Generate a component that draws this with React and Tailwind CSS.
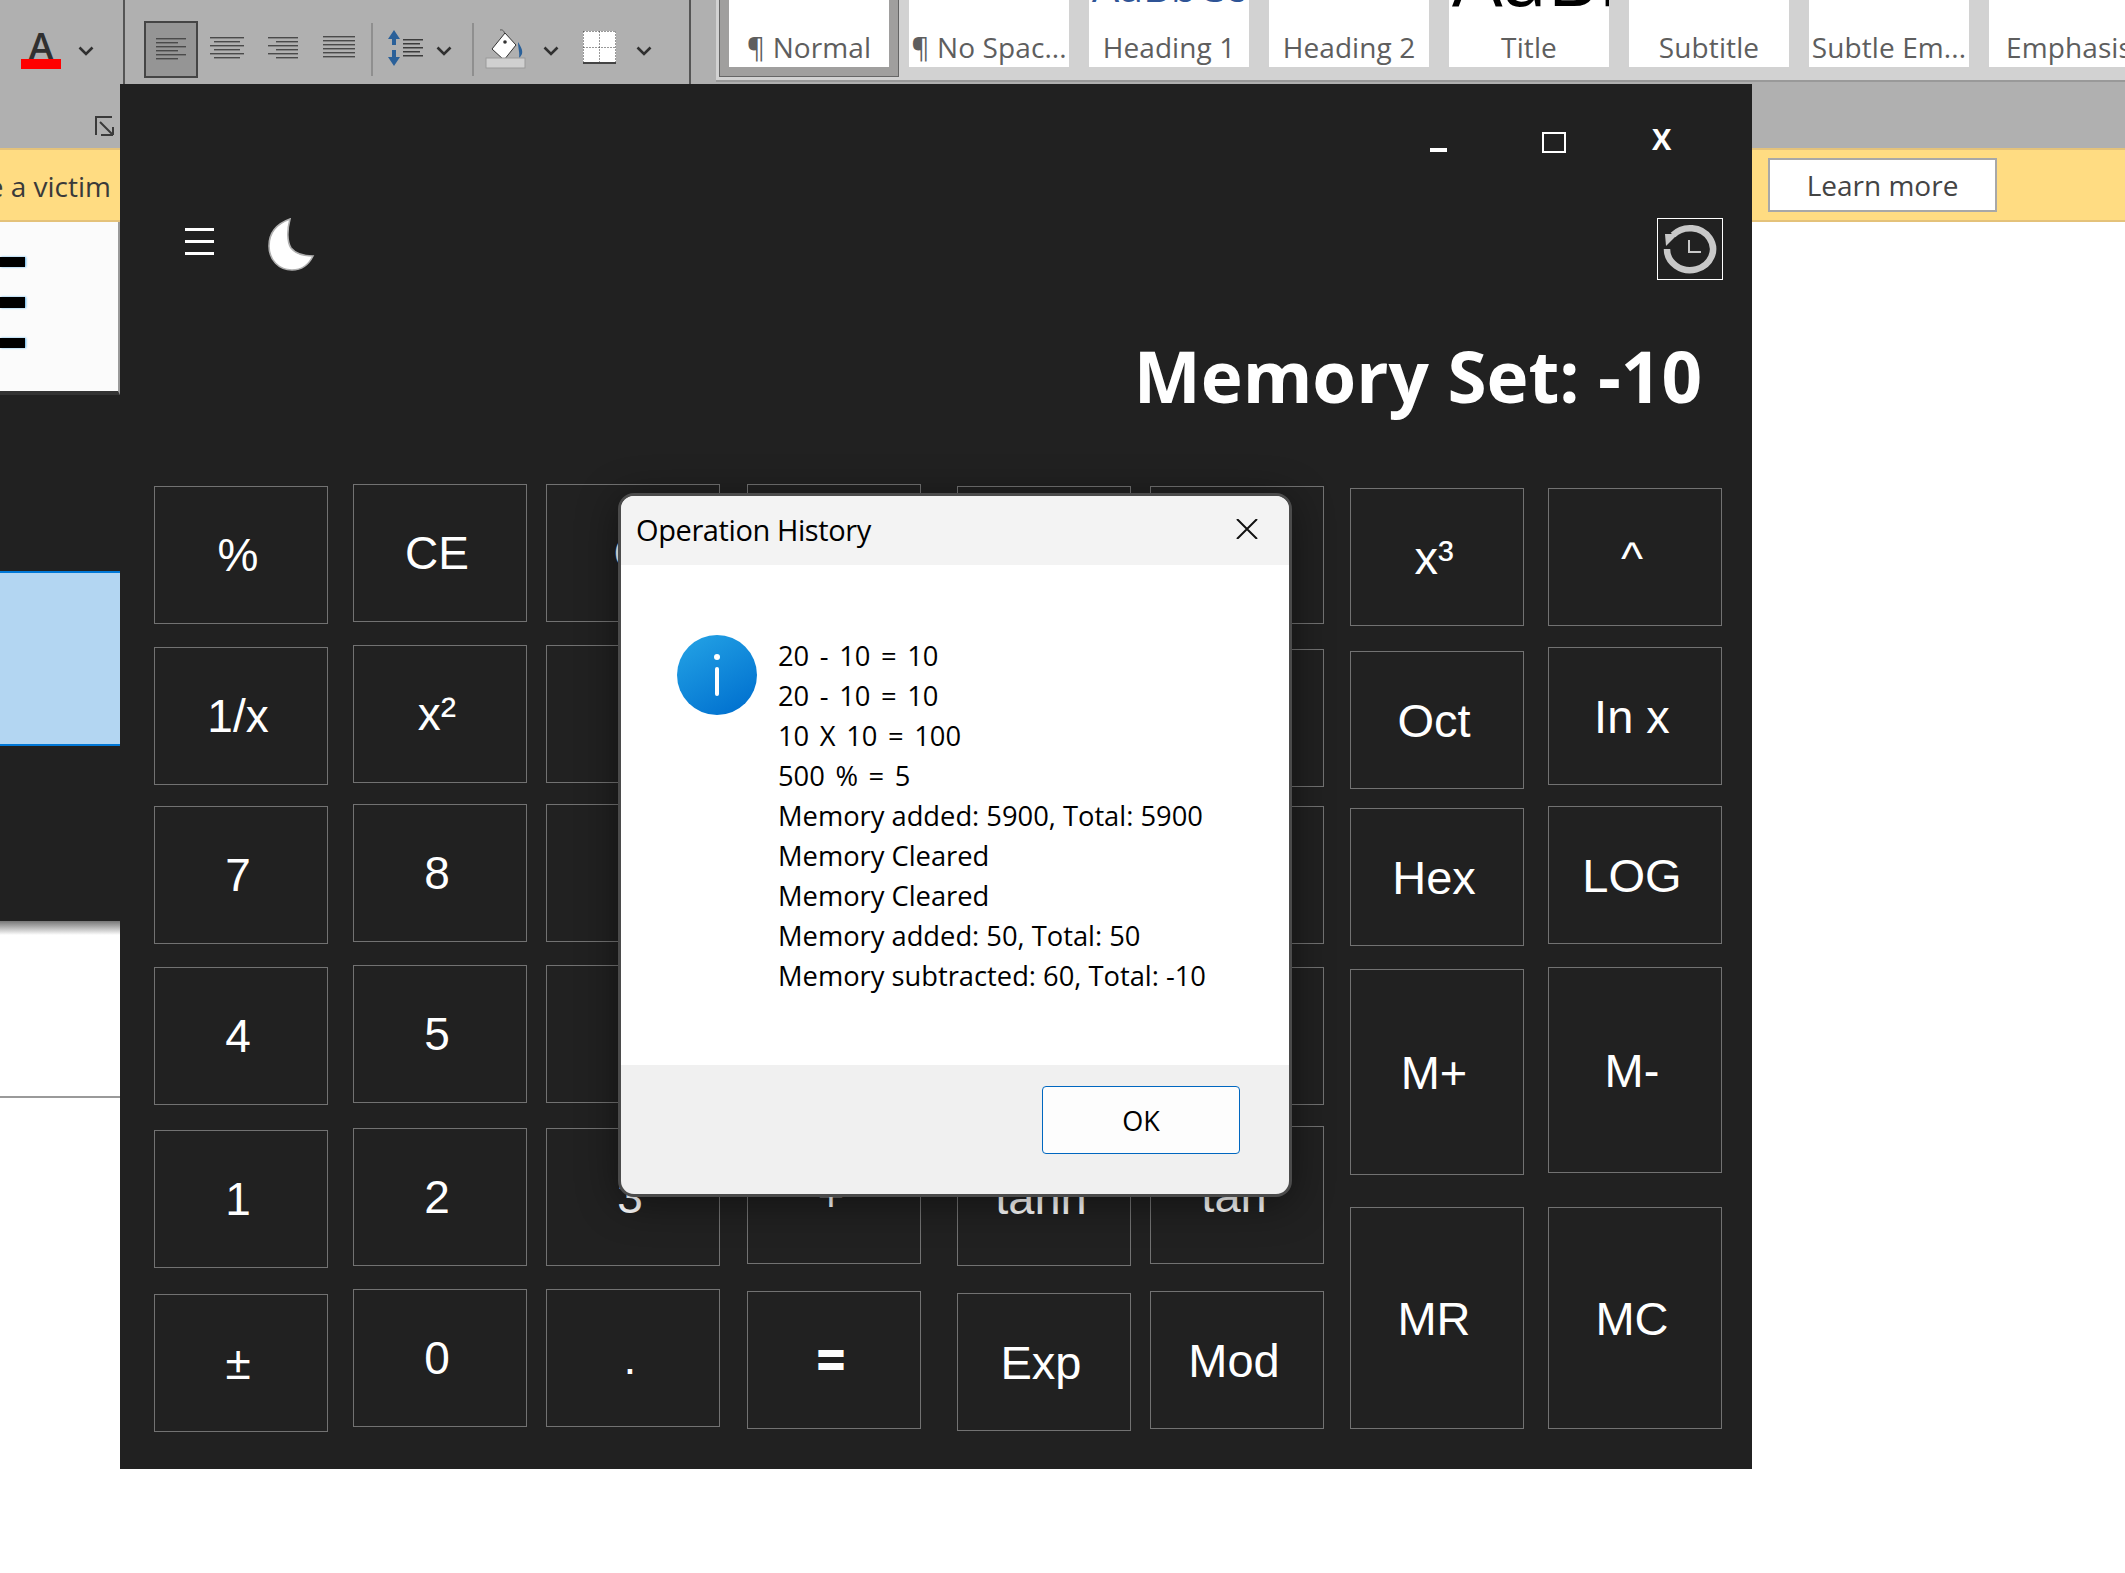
import React from "react";

const sans = "font-['Open_Sans','Noto_Sans',sans-serif]";
const arial = "font-['Liberation_Sans',Arial,sans-serif]";

// each column of keys, offsets are a bit uneven in the real app too
const columns = [
  {
    cls: "ml-[34px] text-[46px]",
    keys: [
      ["%", "mt-[16px] h-[138px]"],
      ["1/x", "mt-[23px] h-[138px]"],
      ["7", "mt-[21px] h-[138px]"],
      ["4", "mt-[23px] h-[138px]"],
      ["1", "mt-[25px] h-[138px]"],
      ["±", "mt-[26px] h-[138px]"],
    ],
  },
  {
    cls: "ml-[25px] text-[46px]",
    keys: [
      ["CE", "mt-[14px] h-[138px]"],
      ["x²", "mt-[23px] h-[138px]"],
      ["8", "mt-[21px] h-[138px]"],
      ["5", "mt-[23px] h-[138px]"],
      ["2", "mt-[25px] h-[138px]"],
      ["0", "mt-[23px] h-[138px]"],
    ],
  },
  {
    cls: "ml-[19px] text-[46px]",
    keys: [
      ["C", "mt-[14px] h-[138px]"],
      ["√", "mt-[23px] h-[138px]"],
      ["9", "mt-[21px] h-[138px]"],
      ["6", "mt-[23px] h-[138px]"],
      ["3", "mt-[25px] h-[138px]"],
      [".", "mt-[23px] h-[138px]"],
    ],
  },
  {
    cls: "ml-[27px] text-[46px]",
    keys: [
      ["", "mt-[14px] h-[138px]"],
      ["", "mt-[23px] h-[138px]"],
      ["", "mt-[21px] h-[138px]"],
      ["", "mt-[23px] h-[138px]"],
      ["+", "mt-[23px] h-[138px]"],
      ["=", "mt-[27px] h-[138px] font-bold [-webkit-text-stroke:2px_white]"],
    ],
  },
  {
    cls: "ml-[36px] text-[47px]",
    keys: [
      ["", "mt-[16px] h-[138px]"],
      ["", "mt-[25px] h-[138px]"],
      ["", "mt-[19px] h-[138px]"],
      ["", "mt-[23px] h-[138px]"],
      ["tanh", "mt-[23px] h-[138px]"],
      ["Exp", "mt-[27px] h-[138px]"],
    ],
  },
  {
    cls: "ml-[19px] text-[47px]",
    keys: [
      ["", "mt-[16px] h-[138px]"],
      ["", "mt-[25px] h-[138px]"],
      ["", "mt-[19px] h-[138px]"],
      ["", "mt-[23px] h-[138px]"],
      ["tan", "mt-[21px] h-[138px]"],
      ["Mod", "mt-[27px] h-[138px]"],
    ],
  },
  {
    cls: "ml-[26px] text-[47px]",
    keys: [
      ["x³", "mt-[18px] h-[138px]"],
      ["Oct", "mt-[25px] h-[138px]"],
      ["Hex", "mt-[19px] h-[138px]"],
      ["M+", "mt-[23px] h-[206px]"],
      ["MR", "mt-[32px] h-[222px]"],
    ],
  },
  {
    cls: "ml-[24px] text-[47px]",
    keys: [
      ["^", "mt-[18px] h-[138px]"],
      ["In x", "mt-[21px] h-[138px]"],
      ["LOG", "mt-[21px] h-[138px]"],
      ["M-", "mt-[23px] h-[206px]"],
      ["MC", "mt-[34px] h-[222px]"],
    ],
  },
];

// first four lines have wider gaps round the operators
const history = [
  ["20 - 10 = 10", "[word-spacing:3.5px]"],
  ["20 - 10 = 10", "[word-spacing:3.5px]"],
  ["10 X 10 = 100", "[word-spacing:3.5px]"],
  ["500 % = 5", "[word-spacing:3.5px]"],
  ["Memory added: 5900, Total: 5900", ""],
  ["Memory Cleared", ""],
  ["Memory Cleared", ""],
  ["Memory added: 50, Total: 50", ""],
  ["Memory subtracted: 60, Total: -10", ""],
];

const Chevron = ({ cls }) => (
  <svg className={cls} width="16" height="10" viewBox="0 0 16 10" fill="none">
    <path d="M1.5 1.5 8 8l6.5-6.5" stroke="#303030" strokeWidth="2.6" />
  </svg>
);

// the paragraph align icons, lines are [x1, x2] per row
const AlignIcon = ({ cls, lines, w }) => (
  <svg className={cls} width={w} height="24" viewBox={`0 0 ${w} 24`}>
    {lines.map((l, i) => (
      <rect key={i} x={l[0]} y={i * 4} width={l[1] - l[0]} height="1.4" fill="#4a4a4a" />
    ))}
  </svg>
);

const Key = ({ label, cls }) => (
  <div
    className={`w-[174px] shrink-0 border border-[#727272] flex items-center justify-center pr-[6px] text-white leading-none ${arial} ${cls}`}
  >
    {label}
  </div>
);

const StyleCard = ({ label, children, cls = "" }) => (
  <div
    className={`relative w-[160px] h-[67px] shrink-0 bg-white overflow-hidden flex items-end justify-center pb-[1px] ${cls}`}
  >
    {children}
    <span className={`text-[28px] leading-[38px] tracking-[0.1px] whitespace-nowrap text-[#5e5e5e] ${sans}`}>
      {label}
    </span>
  </div>
);

const Ribbon = () => (
  <div className="h-[148px] bg-[#b0b0b0] shrink-0">
    <div className="flex h-[84px]">
      {/* font colour */}
      <div className="w-[125px] h-[84px] shrink-0 border-r-2 border-[#555] flex pl-[21px]">
        <div className="w-[40px] pt-[26px] flex flex-col items-center">
          <span className={`text-[38px] leading-[38px] h-[33px] font-semibold text-[#303030] ${sans}`}>A</span>
          <div className="relative w-[40px] h-[10px] bg-[#ff0000]" />
        </div>
        <Chevron cls="ml-[17px] mt-[46px]" />
      </div>

      {/* paragraph */}
      <div className="w-[566px] h-[84px] shrink-0 border-r-2 border-[#555] flex items-start">
        <div className="ml-[19px] mt-[21px] w-[54px] h-[57px] border-2 border-[#444] bg-[#959595] flex items-center justify-center">
          <AlignIcon w={30} lines={[[0, 30], [0, 22], [0, 30], [0, 22], [0, 30], [0, 22]]} />
        </div>
        <AlignIcon cls="ml-[12px] mt-[37px]" w={34} lines={[[0, 34], [4, 30], [0, 34], [4, 30], [0, 34], [4, 30]]} />
        <AlignIcon cls="ml-[24px] mt-[37px]" w={30} lines={[[0, 30], [8, 30], [0, 30], [8, 30], [0, 30], [8, 30]]} />
        <AlignIcon cls="ml-[25px] mt-[36px]" w={32} lines={[[0, 32], [0, 32], [0, 32], [0, 32], [0, 32], [0, 32]]} />
        <div className="ml-[16px] mt-[23px] w-[2px] h-[53px] bg-[#8f8f8f]" />
        <svg className="ml-[14px] mt-[30px]" width="37" height="36" viewBox="0 0 37 36">
          <path d="M7 0 13 9H9v6H5V9H1zM5 20h4v7h4l-6 9-6-9h4z" fill="#2a6099" />
          <g fill="#3c3c3c">
            <rect x="16" y="9" width="20" height="1.5" />
            <rect x="16" y="13" width="17" height="1.5" />
            <rect x="16" y="17" width="20" height="1.5" />
            <rect x="16" y="21" width="17" height="1.5" />
            <rect x="16" y="25" width="20" height="1.5" />
          </g>
        </svg>
        <Chevron cls="ml-[12px] mt-[46px]" />
        <div className="ml-[20px] mt-[23px] w-[2px] h-[53px] bg-[#8f8f8f]" />
        <svg className="ml-[11px] mt-[29px]" width="41" height="40" viewBox="0 0 41 40">
          <path d="M15 1c4-1 5 3 5 8" fill="none" stroke="#555" strokeWidth="1" />
          <path d="M20 4 7 20l12 11 12-15z" fill="#fff" stroke="#333" strokeWidth="1" />
          <circle cx="20" cy="13" r="1.8" fill="#333" />
          <path d="M33 13c3 5 5 8 4 12-1 2-2 3-3 4 1-5-1-10-1-16" fill="#2a6099" />
          <rect x="1" y="29" width="39" height="10" fill="#d0d0d0" stroke="#9a9a9a" strokeWidth="1" />
        </svg>
        <Chevron cls="ml-[17px] mt-[46px]" />
        <svg className="ml-[24px] mt-[31px]" width="33" height="33" viewBox="0 0 33 33">
          <rect width="33" height="33" fill="#fff" />
          <path
            d="M.5 .5h32M.5 16.5h32M.5 .5v32M16.5 .5v32M32.5 .5v32"
            fill="none"
            stroke="#333"
            strokeWidth="1"
            strokeDasharray="1 2"
          />
          <rect y="31" width="33" height="2" fill="#444" />
        </svg>
        <Chevron cls="ml-[20px] mt-[46px]" />
      </div>

      {/* styles gallery */}
      <div className="w-[25px] shrink-0" />
      <div className="flex-1 h-[82px] min-w-0 overflow-hidden bg-[#d2d2d2] border-b-2 border-[#999] flex gap-[20px] pl-[13px]">
        <div className="relative shrink-0 w-[160px] h-[67px] shadow-[0_0_0_9px_#a09f9e,0_0_0_10px_#666]">
          <StyleCard label="¶ Normal" />
        </div>
        <StyleCard label="¶ No Spac..." />
        <StyleCard label="Heading 1">
          <span className={`absolute left-[3px] bottom-[60px] text-[43px] leading-none whitespace-nowrap text-[#2f5496] ${sans}`}>
            AaBbCc
          </span>
        </StyleCard>
        <StyleCard label="Heading 2" />
        <StyleCard label="Title">
          <span className={`absolute left-[3px] bottom-[52px] text-[80px] leading-none whitespace-nowrap text-black ${sans}`}>
            AaBbC
          </span>
        </StyleCard>
        <StyleCard label="Subtitle" />
        <StyleCard label="Subtle Em..." />
        <StyleCard label="Emphasis" />
      </div>
    </div>

    {/* dialog launcher */}
    <svg className="ml-[95px] mt-[32px]" width="20" height="20" viewBox="0 0 20 20" fill="none" stroke="#3a3a3a" strokeWidth="2">
      <path d="M17 1H1v18M18 19H6M18 19v-8M5 6l12 12" />
    </svg>
  </div>
);

const Notice = () => (
  <div className="h-[74px] shrink-0 bg-[#ffdc82] border-y-2 border-[#e4c27a] flex items-center">
    <div className={`w-[111px] pt-[2px] overflow-hidden flex justify-end text-[28px] whitespace-nowrap text-[#3a3a3a] ${sans}`}>
      <span className="shrink-0">be a victim</span>
    </div>
    <button className={`ml-[1657px] w-[229px] h-[54px] bg-white border-2 border-[#a8a8a8] text-[28px] text-[#444] ${sans}`}>
      Learn more
    </button>
  </div>
);

const LeftStrip = () => (
  <div className="w-[120px] flex-1 flex flex-col">
    <div className="h-[173px] bg-[#fbfbfb] border-r-2 border-[#9a9a9a] border-b-4 border-b-[#333] flex flex-col gap-[30px] pt-[35px]">
      <div className="w-[25px] h-[10px] bg-black shadow-[1px_0_2px_#5ab4f0]" />
      <div className="w-[25px] h-[11px] bg-black shadow-[1px_0_2px_#5ab4f0]" />
      <div className="w-[25px] h-[10px] bg-black shadow-[1px_0_2px_#5ab4f0]" />
    </div>
    <div className="h-[176px] bg-[#212121]" />
    <div className="h-[175px] bg-[#b3d6f2] border-y-2 border-[#0078d7]" />
    <div className="h-[175px] bg-[#212121]" />
    <div className="h-[177px] bg-white bg-gradient-to-b from-[#777] to-white to-[8%] border-b-2 border-[#9a9a9a]" />
    <div className="flex-1 bg-white" />
  </div>
);

const Dialog = () => (
  <div className="absolute left-[498px] top-[409px] w-[674px] h-[704px] rounded-[16px] border-[3px] border-[#4b4b4b] overflow-hidden flex flex-col bg-[#f0f0f0] text-black shadow-[0_6px_40px_rgba(0,0,0,0.45)]">
    <div className="h-[69px] shrink-0 bg-[#f3f3f3] flex items-center justify-between pl-[15px] pr-[31px]">
      <span className={`text-[29px] tracking-[-0.4px] -mt-[2px] ${sans}`}>Operation History</span>
      <svg className="-mt-[3px]" width="22" height="20" viewBox="0 0 22 20" fill="none" stroke="#111" strokeWidth="2">
        <path d="M1 0l20 20M21 0 1 20" />
      </svg>
    </div>
    <div className="h-[500px] shrink-0 bg-white flex items-start pl-[56px] pt-[70px]">
      <svg className="shrink-0" width="80" height="80" viewBox="0 0 80 80">
        <defs>
          <linearGradient id="infoBlue" x1="0.2" y1="0" x2="0.8" y2="1">
            <stop offset="0" stopColor="#22a0e4" />
            <stop offset="1" stopColor="#0070cf" />
          </linearGradient>
        </defs>
        <circle cx="40" cy="40" r="40" fill="url(#infoBlue)" />
        <circle cx="40" cy="22" r="3" fill="#fff" />
        <rect x="38" y="32" width="4" height="29" rx="2" fill="#fff" />
      </svg>
      <div className={`ml-[21px] mt-[1px] text-[27.3px] leading-[40px] whitespace-nowrap ${sans}`}>
        {history.map((line, i) => (
          <div key={i} className={line[1]}>
            {line[0]}
          </div>
        ))}
      </div>
    </div>
    <div className="flex-1 flex justify-end items-start pr-[49px] pt-[21px]">
      <button className={`w-[198px] h-[68px] pt-[3px] rounded-[4px] border border-[#0067c0] bg-[#fdfdfd] text-[27px] ${sans}`}>
        OK
      </button>
    </div>
  </div>
);

const CalcWindow = () => (
  <div className="absolute left-[120px] top-[84px] w-[1632px] h-[1385px] bg-[#212121] flex flex-col">
    <div className="relative h-[386px] shrink-0 flex flex-col">
      {/* window controls */}
      <div className={`flex items-start h-[100px] text-white font-bold ${sans}`}>
        <div className="ml-[1310px] mt-[64px] w-[17px] h-[4px] bg-white" />
        <div className="ml-[95px] mt-[48px] w-[24px] h-[21px] border-2 border-white" />
        <span className="ml-[86px] mt-[35px] text-[29px] leading-[40px]">X</span>
      </div>
      {/* menu row */}
      <div className="flex items-start h-[106px]">
        <div className="ml-[65px] mt-[44px] w-[29px] flex flex-col gap-[9px]">
          <div className="h-[3px] bg-white" />
          <div className="h-[3px] bg-white" />
          <div className="h-[3px] bg-white" />
        </div>
        <svg className="ml-[54px] mt-[34px]" width="47" height="54" viewBox="0 0 47 54">
          <path
            d="M22 1C8 6 1 16 1 28c0 14 10 24 23 24 10 0 17-6 21-14-12 0-18-3-22-8C19 24 19 12 22 1z"
            fill="#fff"
            stroke="#b0b0b0"
            strokeWidth="1.6"
          />
        </svg>
        <div className="ml-[1342px] mt-[34px] w-[66px] h-[62px] border border-white flex items-center justify-center">
          <svg width="54" height="50" viewBox="0 0 54 50" fill="none" stroke="#c8c8c8">
            <path d="M10 11A23 21 0 1 1 4 25" strokeWidth="6.5" />
            <path d="M2 10h13L3 22z" fill="#c8c8c8" stroke="none" />
            <path d="M26 16v12h12" strokeWidth="2" />
          </svg>
        </div>
      </div>
      <div className={`text-right pr-[50px] pt-[41px] text-[71px] leading-[90px] font-bold text-white ${sans}`}>
        Memory Set: -10
      </div>
    </div>

    <div className="flex items-start">
      {columns.map((col, i) => (
        <div key={i} className={`flex flex-col ${col.cls}`}>
          {col.keys.map((k, j) => (
            <Key key={j} label={k[0]} cls={k[1]} />
          ))}
        </div>
      ))}
    </div>

    <Dialog />
  </div>
);

export default function App() {
  return (
    <div className="relative w-[2125px] h-[1573px] overflow-hidden bg-white flex flex-col">
      <Ribbon />
      <Notice />
      <LeftStrip />
      <CalcWindow />
    </div>
  );
}
